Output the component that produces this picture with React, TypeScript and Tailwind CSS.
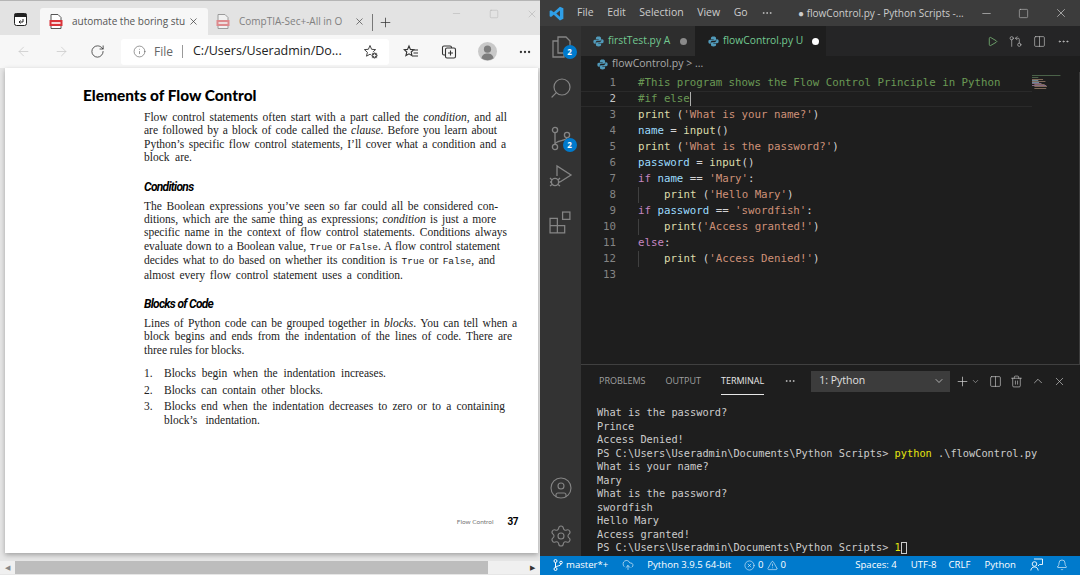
import { ReactNode } from 'react'
import {
  ArrowLeft,
  ArrowRight,
  RotateCw,
  Info,
  X,
  Plus,
  Minus,
  Square,
  Ellipsis,
  Search,
  CircleUser,
  Settings,
  Trash2,
  ChevronUp,
  ChevronDown,
  Columns2,
  Bell,
  CircleX,
  TriangleAlert,
  CloudUpload,
  Play,
  GitPullRequestArrow,
} from 'lucide-react'

function WindowMenuIcon() {
  return (
    <svg width="13" height="13" viewBox="0 0 13 13" className="mb-[9px] shrink-0">
      <rect x="0.5" y="0.5" width="12" height="12" rx="2" fill="#fff" stroke="#222" />
      <rect x="0.5" y="0.5" width="12" height="3.500" fill="#222" />
      <path d="M9 6v3H5M6.500 7.500 5 9l1.500 1.500" fill="none" stroke="#222" />
    </svg>
  )
}

function PdfIcon({ faded }: { faded?: boolean }) {
  return (
    <svg width="14" height="15" viewBox="0 0 14 15" className={faded ? 'shrink-0 opacity-50' : 'shrink-0'}>
      <path d="M2 .5h7l3 3v11H2z" fill="#fff" stroke="#555" />
      <rect x="0.5" y="6" width="13" height="6" fill="#d9343a" />
      <rect x="2.5" y="8" width="9" height="2" fill="#fff" opacity="0.8" />
    </svg>
  )
}

function PyIcon() {
  return (
    <svg width="11" height="11" viewBox="0 0 12 12" className="shrink-0">
      <path d="M6 0.5C4 .5 3.2 1.2 3.2 2.4V3.6H6.2V4.2H2C.9 4.2.4 5 .4 6.3S1 8.4 2 8.4H3V7C3 6 3.8 5.3 4.8 5.3H7.4C8.2 5.3 8.8 4.7 8.8 3.9V2.4C8.8 1.2 8 .5 6 .5Z" fill="#519aba" />
      <path d="M6 11.5C8 11.5 8.8 10.8 8.8 9.6V8.4H5.8V7.8H10C11.1 7.8 11.6 7 11.6 5.7S11 3.6 10 3.6H9V5C9 6 8.2 6.7 7.2 6.7H4.6C3.8 6.7 3.2 7.3 3.2 8.1V9.6C3.2 10.8 4 11.5 6 11.5Z" fill="#519aba" />
    </svg>
  )
}

function VsCodeLogo() {
  return (
    <svg width="15" height="15" viewBox="0 0 24 24" className="shrink-0">
      <path d="M17.5 1 23 3.6v16.8L17.5 23 7.6 14 3.2 17.4 1 16.2V7.8l2.2-1.2L7.6 10zM17.5 7l-5.8 5 5.8 5z" fill="#2f9fe8" />
    </svg>
  )
}

function FilesIcon() {
  return (
    <svg width="24" height="24" viewBox="0 0 24 24" fill="none" stroke="#858585" strokeWidth="1.3">
      <path d="M9 2h8l4 4v12H9z" />
      <path d="M9 6H4v16h11v-4" />
    </svg>
  )
}

function SourceControlIcon() {
  return (
    <svg width="24" height="26" viewBox="0 0 24 26" fill="none" stroke="#858585" strokeWidth="1.3">
      <circle cx="6" cy="4" r="2.6" />
      <circle cx="6" cy="21" r="2.6" />
      <circle cx="18" cy="9" r="2.6" />
      <path d="M6 6.6v12M18 11.6c0 4-12 2-12 7" />
    </svg>
  )
}

function DebugIcon() {
  return (
    <svg width="24" height="24" viewBox="0 0 24 24" fill="none" stroke="#858585" strokeWidth="1.3">
      <path d="M8 12V2l14 9-11 7" />
      <circle cx="6" cy="18" r="3.6" />
      <path d="M1 14l2 2M11 14l-2 2M1 18h1M10 18h1M1 22l2-1.5M11 22l-2-1.5" />
    </svg>
  )
}

function ExtensionsIcon() {
  return (
    <svg width="23" height="23" viewBox="0 0 22 22" fill="none" stroke="#858585" strokeWidth="1.2">
      <path d="M1 7h7v7h7v7H1zM1 14h7v7" />
      <rect x="13" y="1" width="7" height="7" />
    </svg>
  )
}

function StarPlusIcon() {
  return (
    <svg width="16" height="16" viewBox="0 0 16 16" fill="none" stroke="#444" strokeWidth="1">
      <path d="M7 1.500 8.600 5.300l4 .3-3 2.700.9 3.900L7 10.200 3.500 12.200l.9-3.900-3-2.700 4-.3z" />
      <circle cx="11.500" cy="11.500" r="3.500" fill="#555" stroke="#fff" />
      <path d="M11.500 9.800v3.400M9.800 11.500h3.400" stroke="#fff" strokeWidth="0.8" />
    </svg>
  )
}

function FavoritesIcon() {
  return (
    <svg width="16" height="16" viewBox="0 0 16 16" fill="none" stroke="#333" strokeWidth="1.1">
      <path d="M6 2l1.4 3.4 3.4.3-2.6 2.3.8 3.6L6 9.8 2.9 11.6l.9-3.6L1.2 5.7l3.3-.3z" />
      <path d="M11 6h4M10.5 9h4.5M9.5 12H15" />
    </svg>
  )
}

function CollectionsIcon() {
  return (
    <svg width="16" height="16" viewBox="0 0 16 16" fill="none" stroke="#333" strokeWidth="1.1">
      <rect x="4.5" y="4" width="10" height="10" rx="1.5" />
      <path d="M4 11H3a1.5 1.5 0 0 1-1.5-1.5v-6A1.5 1.5 0 0 1 3 2h6a1.5 1.5 0 0 1 1.5 1.5V4M9.5 6.5v5M7 9h5" />
    </svg>
  )
}

function FeedbackIcon() {
  return (
    <svg width="13" height="13" viewBox="0 0 13 13" fill="none" stroke="white" strokeWidth="0.9">
      <circle cx="4.500" cy="6" r="2.300" />
      <path d="M.8 12.500c.3-2.500 1.800-3.500 3.700-3.500s3.400 1 3.700 3.500" />
      <path d="M4 1h8.500v5.500H9.500L8 8" />
    </svg>
  )
}

function Avatar() {
  return (
    <svg width="19" height="19" viewBox="0 0 19 19">
      <circle cx="9.5" cy="9.5" r="9.5" fill="#c9c9c9" />
      <circle cx="9.5" cy="7.2" r="3.6" fill="#7d7d7d" />
      <path d="M3.5 16.2c.6-3.4 3-4.6 6-4.6s5.400 1.200 6 4.600a9.500 9.500 0 0 1-12 0Z" fill="#7d7d7d" />
    </svg>
  )
}

function Minimap() {
  return (
    <svg width="30" height="14" viewBox="0 0 38 14" preserveAspectRatio="none" className="opacity-70">
      <rect x="0" y="0" width="36" height="1" fill="#5f7f5c" />
      <rect x="0" y="2" width="8" height="1" fill="#5f7f5c" />
      <rect x="0" y="4" width="14" height="1" fill="#a98a72" />
      <rect x="0" y="5" width="8" height="1" fill="#8fb6c9" />
      <rect x="0" y="6" width="17" height="1" fill="#a98a72" />
      <rect x="0" y="7" width="9" height="1" fill="#8fb6c9" />
      <rect x="0" y="8" width="12" height="1" fill="#b08ab0" />
      <rect x="3" y="9" width="13" height="1" fill="#a98a72" />
      <rect x="0" y="10" width="18" height="1" fill="#b08ab0" />
      <rect x="3" y="11" width="16" height="1" fill="#a98a72" />
      <rect x="3" y="13" width="15" height="1" fill="#a98a72" />
    </svg>
  )
}

function Badge() {
  return (
    <span className="absolute -right-1 bottom-0 flex h-[14px] w-[14px] items-center justify-center rounded-full bg-[#007acc] text-[8px] font-bold text-white">
      2
    </span>
  )
}

function Line({ w, children }: { w: string; children: ReactNode }) {
  return <div className={`${w} whitespace-nowrap [text-align-last:justify]`}>{children}</div>
}

function C({ children }: { children: ReactNode }) {
  return <span className="font-['Liberation_Mono',monospace] text-[9.5px]">{children}</span>
}

function BrowserPane() {
  return (
    <div className="flex h-full w-[540px] shrink-0 flex-col border-t border-[#b5b5b5] bg-[#e9e9e9] font-['Open_Sans',sans-serif]">
      <div className="flex h-[34px] shrink-0 items-end bg-[#e3e3e3] pl-[14px]">
        <WindowMenuIcon />
        <div className="ml-[13px] flex h-[27px] w-[168px] items-center gap-[9px] rounded-t-[3px] bg-[#f7f7f7] pl-[9px] text-[10px] text-[#555]">
          <PdfIcon />
          <span className="w-[107px] whitespace-nowrap">automate the boring stu</span>
          <X size={11} strokeWidth={1.5} className="shrink-0 text-[#333]" />
        </div>
        <div className="flex h-[27px] w-[165px] items-center gap-[9px] pl-[8px] text-[10px] text-[#808080]">
          <PdfIcon faded />
          <span className="w-[110px] whitespace-nowrap">CompTIA-Sec+-All in O</span>
          <X size={11} strokeWidth={1.5} className="-ml-[4px] shrink-0 text-[#444]" />
        </div>
        <div className="-ml-[1px] mb-[4px] h-[17px] w-px bg-[#777]" />
        <Plus size={15} strokeWidth={1.2} className="mb-[5px] ml-[5px] text-[#333]" />
        <div className="ml-auto flex h-full items-start gap-[27px] pr-[2px] pt-[7px] text-[#aaa]">
          <Minus size={11} strokeWidth={1} />
          <Square size={10} strokeWidth={1} className="mt-px" />
          <X size={12} strokeWidth={1} />
        </div>
      </div>
      <div className="flex h-[33px] shrink-0 items-center bg-[#f7f7f7] pl-[16px] text-[#333]">
        <ArrowLeft size={15} strokeWidth={1.2} className="text-[#c8c8c8]" />
        <ArrowRight size={15} strokeWidth={1.2} className="ml-[23px] text-[#c8c8c8]" />
        <RotateCw size={15} strokeWidth={1.3} className="ml-[21px]" />
        <div className="ml-[16px] flex h-[26px] w-[268px] items-center rounded-[3px] bg-white pl-[12px] text-[12px]">
          <Info size={13} strokeWidth={1.1} className="shrink-0 text-[#555]" />
          <span className="ml-[8px] text-[#666]">File</span>
          <span className="ml-[9px] h-[13px] w-px bg-[#999]" />
          <span className="ml-[10px] w-[170px] whitespace-nowrap text-[12.500px] text-[#222]">C:/Users/Useradmin/Do...</span>
          <StarPlusIcon />
        </div>
        <div className="ml-[14px]">
          <FavoritesIcon />
        </div>
        <div className="ml-[22px]">
          <CollectionsIcon />
        </div>
        <div className="ml-[21px]">
          <Avatar />
        </div>
        <Ellipsis size={14} className="ml-[21px]" />
      </div>
      <div className="flex min-h-0 flex-1 flex-col bg-[#e6e6e6]">
        <div className="ml-[5px] mr-[2px] h-[485px] shrink-0 bg-white pl-[78px] pt-[18px] shadow-[0_2px_5px_rgba(0,0,0,0.3)] font-['Liberation_Serif',serif] text-[11.5px] leading-[13.4px] text-[#222]">
          <h1 className="font-['Lato',sans-serif] text-[15.4px] font-black leading-[18px] text-black">Elements of Flow Control</h1>
          <div className="ml-[61px] mt-[7px]">
            <Line w="w-[363px]">Flow control statements often start with a part called the <i>condition</i>, and all</Line>
            <Line w="w-[353px]">are followed by a block of code called the <i>clause</i>. Before you learn about</Line>
            <Line w="w-[362px]">Python’s specific flow control statements, I’ll cover what a condition and a</Line>
            <Line w="w-[48px]">block are.</Line>
            <h2 className="mb-[5px] mt-[14px] h-[16px] font-['Roboto',sans-serif] text-[12px] font-bold italic leading-[16px] tracking-[-0.7px] text-black">Conditions</h2>
            <Line w="w-[354px]">The Boolean expressions you’ve seen so far could all be considered con-</Line>
            <Line w="w-[352px]">ditions, which are the same thing as expressions; <i>condition</i> is just a more</Line>
            <Line w="w-[363px]">specific name in the context of flow control statements. Conditions always</Line>
            <Line w="w-[356px]">evaluate down to a Boolean value, <C>True</C> or <C>False</C>. A flow control statement</Line>
            <Line w="w-[351px]">decides what to do based on whether its condition is <C>True</C> or <C>False</C>, and</Line>
            <Line w="w-[259px]">almost every flow control statement uses a condition.</Line>
            <h2 className="mb-[5px] mt-[14px] h-[16px] font-['Roboto',sans-serif] text-[12px] font-bold italic leading-[16px] tracking-[-0.7px] text-black">Blocks of Code</h2>
            <Line w="w-[373px]">Lines of Python code can be grouped together in <i>blocks</i>. You can tell when a</Line>
            <Line w="w-[368px]">block begins and ends from the indentation of the lines of code. There are</Line>
            <Line w="w-[80px]">three rules for blocks.</Line>
            <ol className="mt-[10px] flex flex-col gap-[3px]">
              <li className="flex">
                <span className="w-[20px]">1.</span>
                <Line w="w-[222px]">Blocks begin when the indentation increases.</Line>
              </li>
              <li className="flex">
                <span className="w-[20px]">2.</span>
                <Line w="w-[159px]">Blocks can contain other blocks.</Line>
              </li>
              <li className="flex">
                <span className="w-[20px]">3.</span>
                <div>
                  <Line w="w-[341px]">Blocks end when the indentation decreases to zero or to a containing</Line>
                  <Line w="w-[96px]">block’s indentation.</Line>
                </div>
              </li>
            </ol>
          </div>
          <div className="mr-[20px] mt-[88px] flex items-center justify-end">
            <span className="font-['Lato',sans-serif] text-[6.500px] text-[#777]">Flow Control</span>
            <span className="ml-[14px] font-['Roboto',sans-serif] text-[10px] font-bold tracking-[-0.5px] text-black">37</span>
          </div>
        </div>
        <div className="mt-[8px] flex h-[13px] shrink-0 items-center bg-[#f0f0f0]">
          <span className="w-[15px] pl-[5px] text-[7px] leading-none text-[#888]">◀</span>
          <div className="h-full w-[473px] bg-[#bdbdbd]" />
          <span className="ml-auto pr-[5px] text-[7px] leading-none text-[#333]">▶</span>
        </div>
      </div>
    </div>
  )
}

const menus = ['File', 'Edit', 'Selection', 'View', 'Go']

type Tok = [string, string]

const kw = 'text-[#c586c0]'
const fn = 'text-[#dcdcaa]'
const str = 'text-[#ce9178]'
const vr = 'text-[#9cdcfe]'
const pl = 'text-[#d4d4d4]'
const cm = 'text-[#6a9955]'

const codeLines: { indent?: boolean; toks: Tok[] }[] = [
  { toks: [['#This program shows the Flow Control Principle in Python', cm]] },
  { toks: [['#if else', cm]] },
  { toks: [['print', fn], [' (', pl], ["'What is your name?'", str], [')', pl]] },
  { toks: [['name', vr], [' = ', pl], ['input', fn], ['()', pl]] },
  { toks: [['print', fn], [' (', pl], ["'What is the password?'", str], [')', pl]] },
  { toks: [['password', vr], [' = ', pl], ['input', fn], ['()', pl]] },
  { toks: [['if', kw], [' ', pl], ['name', vr], [' == ', pl], ["'Mary'", str], [':', pl]] },
  { indent: true, toks: [['print', fn], [' (', pl], ["'Hello Mary'", str], [')', pl]] },
  { toks: [['if', kw], [' ', pl], ['password', vr], [' == ', pl], ["'swordfish'", str], [':', pl]] },
  { indent: true, toks: [['print', fn], ['(', pl], ["'Access granted!'", str], [')', pl]] },
  { toks: [['else', kw], [':', pl]] },
  { indent: true, toks: [['print', fn], [' (', pl], ["'Access Denied!'", str], [')', pl]] },
  { toks: [] },
]

const terminalLines = [
  'What is the password?',
  'Prince',
  'Access Denied!',
  'PS C:\\Users\\Useradmin\\Documents\\Python Scripts> ',
  'What is your name?',
  'Mary',
  'What is the password?',
  'swordfish',
  'Hello Mary',
  'Access granted!',
]

function EditorPane() {
  return (
    <div className="flex h-full min-w-0 flex-1 flex-col bg-[#1e1e1e] font-['Open_Sans',sans-serif]">
      <div className="flex h-[26px] shrink-0 items-center bg-[#3c3c3c] text-[10.5px] text-[#cccccc]">
        <div className="ml-[9px] mr-[13px]">
          <VsCodeLogo />
        </div>
        <div className="flex items-center gap-[13.500px]">
          {menus.map(m => (
            <span key={m}>{m}</span>
          ))}
          <Ellipsis size={12} strokeWidth={1.5} />
        </div>
        <span className="ml-[25px] whitespace-nowrap text-[10px]">● flowControl.py - Python Scripts -...</span>
        <div className="ml-auto flex items-center gap-[25px] pr-[12px]">
          <Minus size={13} strokeWidth={1.2} />
          <Square size={11} strokeWidth={1.2} />
          <X size={14} strokeWidth={1.2} />
        </div>
      </div>
      <div className="flex min-h-0 flex-1">
        <div className="flex w-[41px] shrink-0 flex-col items-center bg-[#333333] pt-[9px]">
          <div className="relative">
            <FilesIcon />
            <Badge />
          </div>
          <Search size={24} strokeWidth={1.2} color="#858585" className="mt-[17px] -scale-x-100" />
          <div className="relative mt-[26px]">
            <SourceControlIcon />
            <Badge />
          </div>
          <div className="mt-[12px]">
            <DebugIcon />
          </div>
          <div className="mt-[23px]">
            <ExtensionsIcon />
          </div>
          <CircleUser size={24} strokeWidth={1.1} color="#858585" className="mt-auto" />
          <Settings size={24} strokeWidth={1.1} color="#858585" className="mb-[8px] mt-[24px]" />
        </div>
        <div className="flex min-w-0 flex-1 flex-col">
          <div className="flex h-[30px] shrink-0 items-center bg-[#252526]">
            <div className="flex h-full w-[114px] items-center gap-[3px] bg-[#2d2d2d] pl-[12px] text-[10.3px] text-[#73c991]">
              <PyIcon />
              <span className="ml-[1px]">firstTest.py A</span>
              <span className="ml-[7px] h-[7px] w-[7px] rounded-full bg-[#8a8a8a]" />
            </div>
            <div className="flex h-full w-[131px] items-center gap-[3px] bg-[#1e1e1e] pl-[13px] text-[10.3px] text-[#73c991]">
              <PyIcon />
              <span className="ml-[1px]">flowControl.py U</span>
              <span className="ml-[6px] h-[7px] w-[7px] rounded-full bg-white" />
            </div>
            <div className="ml-auto flex items-center gap-[11px] pr-[10px] text-[#c5c5c5]">
              <Play size={11} strokeWidth={1.5} color="#89d185" />
              <GitPullRequestArrow size={13} strokeWidth={1.2} />
              <Columns2 size={13} strokeWidth={1.2} />
              <Ellipsis size={13} strokeWidth={1.5} />
            </div>
          </div>
          <div className="flex h-[16px] shrink-0 items-center gap-[4px] pl-[16px] text-[10.5px] text-[#a9a9a9]">
            <PyIcon />
            <span>flowControl.py &gt; ...</span>
          </div>
          <div className="flex h-[293px] shrink-0 overflow-hidden border-b border-[#404040]">
            <div className="flex min-w-0 flex-1 flex-col pt-[3px] font-['DejaVu_Sans_Mono',monospace] text-[10.75px] leading-[16px]">
              {codeLines.map((line, i) => (
                <div key={i} className={`flex h-[16px] ${i === 1 ? 'border-y border-[#2a2a2a]' : ''}`}>
                  <span className={`w-[35px] shrink-0 text-right ${i === 1 ? 'leading-[14px] text-[#c6c6c6]' : 'text-[#858585]'}`}>{i + 1}</span>
                  <span className={`ml-[22px] whitespace-pre ${i === 1 ? 'leading-[14px]' : ''} ${line.indent ? 'border-l border-[#404040] pl-[25px]' : ''}`}>
                    {line.toks.map((t, k) => (
                      <span key={k} className={t[1]}>{t[0]}</span>
                    ))}
                  </span>
                  {i === 1 && <span className="h-[14px] w-px bg-[#aeafad]" />}
                </div>
              ))}
            </div>
            <div className="w-[48px] shrink-0 border-r border-[#3c3c3c] pt-[3px]">
              <Minimap />
            </div>
          </div>
          <div className="flex h-[32px] shrink-0 items-center pl-[18px] text-[9px] text-[#a0a0a0]">
            <span>PROBLEMS</span>
            <span className="ml-[20px]">OUTPUT</span>
            <span className="relative ml-[20px] text-[#e7e7e7]">
              TERMINAL
              <span className="absolute -bottom-[7px] left-0 h-px w-full bg-[#e7e7e7]" />
            </span>
            <Ellipsis size={12} strokeWidth={1.5} className="ml-[20px] text-[#cccccc]" />
            <div className="ml-[15px] flex h-[21px] w-[139px] items-center justify-between bg-[#3c3c3c] pl-[8px] pr-[5px] text-[10.5px] text-[#e0e0e0]">
              <span>1: Python</span>
              <ChevronDown size={12} strokeWidth={1.4} />
            </div>
            <Plus size={15} strokeWidth={1.2} className="ml-[5px] text-[#cccccc]" />
            <ChevronDown size={9} strokeWidth={1.4} className="ml-px text-[#cccccc]" />
            <Columns2 size={13} strokeWidth={1.2} className="ml-[9px] text-[#cccccc]" />
            <Trash2 size={13} strokeWidth={1.2} className="ml-[8px] text-[#cccccc]" />
            <ChevronUp size={14} strokeWidth={1.2} className="ml-[8px] text-[#cccccc]" />
            <X size={13} strokeWidth={1.2} className="ml-[8px] text-[#cccccc]" />
          </div>
          <div className="min-h-0 flex-1 overflow-hidden whitespace-pre pl-[16px] pt-[9px] font-['DejaVu_Sans_Mono',monospace] text-[10.3px] leading-[13.5px] text-[#cccccc]">
            {terminalLines.map((t, i) => (
              <div key={i}>
                {t}
                {i === 3 && <span className="text-[#e5e510]">python</span>}
                {i === 3 && ' .\\flowControl.py'}
              </div>
            ))}
            <div className="flex">
              <span>PS C:\Users\Useradmin\Documents\Python Scripts&gt; </span>
              <span className="text-[#e5e510]">1</span>
              <span className="mt-px h-[12px] w-[6px] border border-[#cccccc]" />
            </div>
          </div>
        </div>
      </div>
      <div className="flex h-[19px] shrink-0 items-center bg-[#007acc] pb-[1px] text-[9.6px] text-white">
        <svg width="10" height="12" viewBox="0 0 10 12" fill="none" stroke="white" className="ml-[13px]">
          <circle cx="2.500" cy="2" r="1.500" />
          <circle cx="2.500" cy="10" r="1.500" />
          <circle cx="8" cy="3.500" r="1.300" />
          <path d="M2.500 3.500v5M8 5c0 2.500-5.500 1.500-5.500 3.500" />
        </svg>
        <span className="ml-[3px]">master*+</span>
        <CloudUpload size={12} strokeWidth={1.2} className="ml-[14px]" />
        <span className="ml-[13px]">Python 3.9.5 64-bit</span>
        <CircleX size={11} strokeWidth={1.2} className="ml-[13px]" />
        <span className="ml-[3px]">0</span>
        <TriangleAlert size={11} strokeWidth={1.2} className="ml-[3px]" />
        <span className="ml-[3px]">0</span>
        <div className="ml-auto flex items-center pr-[12px]">
          <span>Spaces: 4</span>
          <span className="ml-[14px]">UTF-8</span>
          <span className="ml-[12px]">CRLF</span>
          <span className="ml-[14px]">Python</span>
          <span className="ml-[14px]">
            <FeedbackIcon />
          </span>
          <Bell size={12} strokeWidth={1.2} className="ml-[13px]" />
        </div>
      </div>
    </div>
  )
}

export default function App() {
  return (
    <div className="flex h-[575px] w-[1080px] overflow-hidden">
      <BrowserPane />
      <EditorPane />
    </div>
  )
}
